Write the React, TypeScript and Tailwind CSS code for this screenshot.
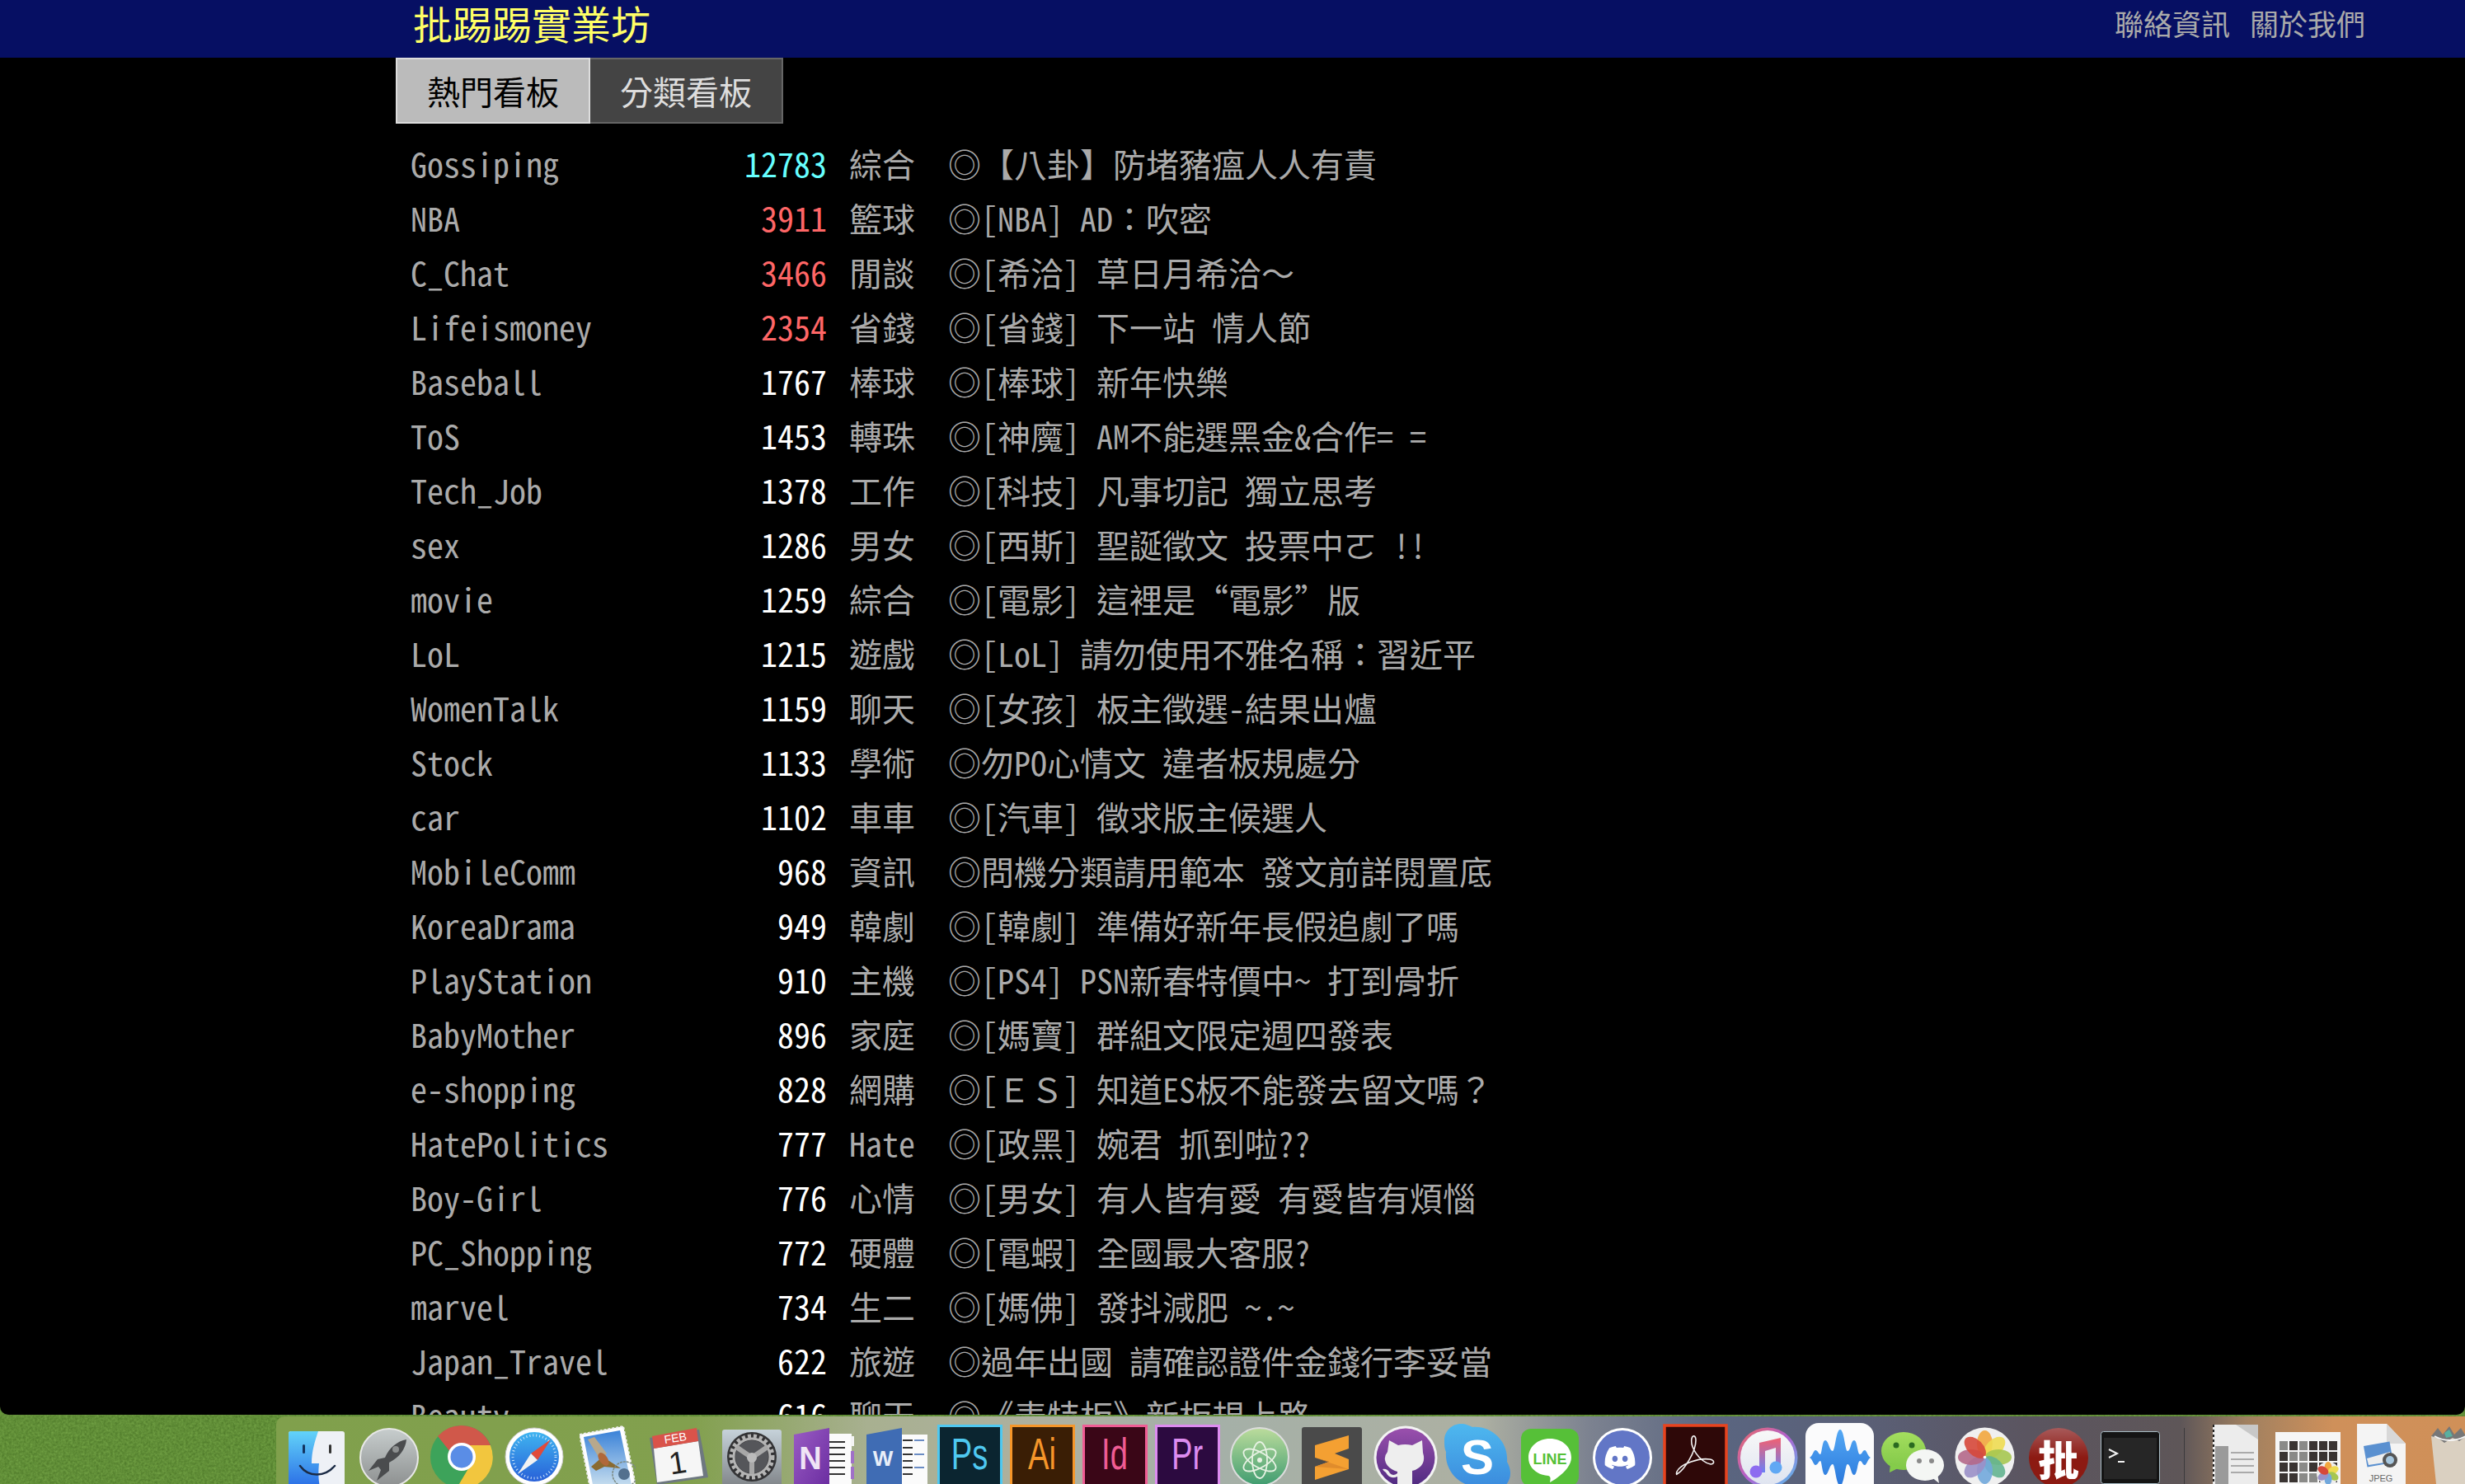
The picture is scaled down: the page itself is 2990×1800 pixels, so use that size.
import { FaDiscord } from "react-icons/fa";

type Row = {
  name: string;
  count: string;
  category: string;
  title: string;
  tone?: "cyan" | "red";
};

const rows: Row[] = [
  { name: "Gossiping", count: "12783", category: "綜合", title: "◎【八卦】防堵豬瘟人人有責", tone: "cyan" },
  { name: "NBA", count: "3911", category: "籃球", title: "◎[NBA] AD：吹密", tone: "red" },
  { name: "C_Chat", count: "3466", category: "閒談", title: "◎[希洽] 草日月希洽～", tone: "red" },
  { name: "Lifeismoney", count: "2354", category: "省錢", title: "◎[省錢] 下一站 情人節", tone: "red" },
  { name: "Baseball", count: "1767", category: "棒球", title: "◎[棒球] 新年快樂" },
  { name: "ToS", count: "1453", category: "轉珠", title: "◎[神魔] AM不能選黑金&合作= =" },
  { name: "Tech_Job", count: "1378", category: "工作", title: "◎[科技] 凡事切記 獨立思考" },
  { name: "sex", count: "1286", category: "男女", title: "◎[西斯] 聖誕徵文 投票中ㄛ !!" },
  { name: "movie", count: "1259", category: "綜合", title: "◎[電影] 這裡是“電影”版" },
  { name: "LoL", count: "1215", category: "遊戲", title: "◎[LoL] 請勿使用不雅名稱：習近平" },
  { name: "WomenTalk", count: "1159", category: "聊天", title: "◎[女孩] 板主徵選-結果出爐" },
  { name: "Stock", count: "1133", category: "學術", title: "◎勿PO心情文 違者板規處分" },
  { name: "car", count: "1102", category: "車車", title: "◎[汽車] 徵求版主候選人" },
  { name: "MobileComm", count: "968", category: "資訊", title: "◎問機分類請用範本 發文前詳閱置底" },
  { name: "KoreaDrama", count: "949", category: "韓劇", title: "◎[韓劇] 準備好新年長假追劇了嗎" },
  { name: "PlayStation", count: "910", category: "主機", title: "◎[PS4] PSN新春特價中~ 打到骨折" },
  { name: "BabyMother", count: "896", category: "家庭", title: "◎[媽寶] 群組文限定週四發表" },
  { name: "e-shopping", count: "828", category: "網購", title: "◎[ＥＳ] 知道ES板不能發去留文嗎？" },
  { name: "HatePolitics", count: "777", category: "Hate", title: "◎[政黑] 婉君 抓到啦??" },
  { name: "Boy-Girl", count: "776", category: "心情", title: "◎[男女] 有人皆有愛 有愛皆有煩惱" },
  { name: "PC_Shopping", count: "772", category: "硬體", title: "◎[電蝦] 全國最大客服?" },
  { name: "marvel", count: "734", category: "生二", title: "◎[媽佛] 發抖減肥 ~.~" },
  { name: "Japan_Travel", count: "622", category: "旅遊", title: "◎過年出國 請確認證件金錢行李妥當" },
  { name: "Beauty", count: "616", category: "聊天", title: "◎《表特板》新板規上路" },
];

type IconProps = { className: string };

function Adobe({ className, label, border, bg }: IconProps & { label: string; border: string; bg: string }) {
  return (
    <svg className={className} viewBox="0 0 79 79">
      <rect x="1.5" y="1.5" width="76" height="76" fill={bg} stroke={border} strokeWidth="3" />
      <text
        transform="translate(39 54) scale(0.72 1)"
        textAnchor="middle"
        fontSize="53"
        fontFamily="Liberation Sans, sans-serif"
        fill={border}
      >
        {label}
      </text>
    </svg>
  );
}

function Finder({ className }: IconProps) {
  return (
    <svg className={className} viewBox="0 0 68 68">
      <defs>
        <linearGradient id="finder" x1="0" y1="0" x2="0" y2="1">
          <stop offset="0" stopColor="#62d3f9" />
          <stop offset="1" stopColor="#2a6de6" />
        </linearGradient>
      </defs>
      <rect width="68" height="68" rx="3" fill="#eef1f6" />
      <path d="M3 0H36C32 12 28 24 28 39H37C36 48 36 58 38 68H3A3 3 0 0 1 0 65V3A3 3 0 0 1 3 0Z" fill="url(#finder)" />
      <rect x="17" y="16" width="3" height="11" rx="1.5" fill="#12335f" />
      <rect x="49" y="16" width="3" height="11" rx="1.5" fill="#333" />
      <path d="M14 42C24 56 44 56 56 42" fill="none" stroke="#1b2b45" strokeWidth="2.5" strokeLinecap="round" />
    </svg>
  );
}

function Launchpad({ className }: IconProps) {
  return (
    <svg className={className} viewBox="0 0 72 72">
      <defs>
        <linearGradient id="lp" x1="0" y1="0" x2="0" y2="1">
          <stop offset="0" stopColor="#c7cdcd" />
          <stop offset="1" stopColor="#8d9090" />
        </linearGradient>
      </defs>
      <circle cx="36" cy="36" r="35" fill="url(#lp)" stroke="#e8e8e8" strokeWidth="2" />
      <path d="M57 14C46 16 36 24 31 36L22 38L11 52L23 47L26 51L21 64L36 52L36 42C48 36 56 26 57 14Z" fill="#4a4c4e" />
      <circle cx="44" cy="26" r="4" fill="#8d9090" />
    </svg>
  );
}

function Chrome({ className }: IconProps) {
  return (
    <svg className={className} viewBox="0 0 76 76">
      <circle cx="38" cy="38" r="38" fill="#3da35a" />
      <path d="M38 0A38 38 0 0 1 73 24H38A15 15 0 0 0 24 32L9 13A38 38 0 0 1 38 0Z" fill="#d0584a" />
      <path d="M38 24H73A38 38 0 0 1 32 76L48 49A15 15 0 0 0 38 24Z" fill="#f2c63e" />
      <circle cx="38" cy="38" r="17" fill="#fff" />
      <circle cx="38" cy="38" r="13.5" fill="#5a8de6" />
    </svg>
  );
}

function Safari({ className }: IconProps) {
  return (
    <svg className={className} viewBox="0 0 72 72">
      <defs>
        <linearGradient id="saf" x1="0" y1="0" x2="0" y2="1">
          <stop offset="0" stopColor="#3fb4f0" />
          <stop offset="1" stopColor="#2860d8" />
        </linearGradient>
      </defs>
      <circle cx="36" cy="36" r="35" fill="#fff" stroke="#c8c8c8" />
      <circle cx="36" cy="36" r="30" fill="url(#saf)" />
      <circle cx="36" cy="36" r="26" fill="none" stroke="#cfe6fa" strokeWidth="3" strokeDasharray="1 3" />
      <path d="M56 15L32 32L40 40Z" fill="#e04a3a" />
      <path d="M16 57L32 32L40 40Z" fill="#f2f2f2" />
    </svg>
  );
}

function Mail({ className }: IconProps) {
  return (
    <svg className={className} viewBox="0 0 68 72">
      <defs>
        <linearGradient id="sky" x1="0" y1="0" x2="0" y2="1">
          <stop offset="0" stopColor="#3a82d8" />
          <stop offset="1" stopColor="#c4dcee" />
        </linearGradient>
      </defs>
      <path d="M0 11L53 1L68 72H12Z" fill="#fff" stroke="#eeeeee" strokeWidth="2" strokeDasharray="3 2" />
      <path d="M5 14L49 6L63 72H16Z" fill="url(#sky)" />
      <path d="M10 17L18 14L33 34L26 43Z" fill="#b8a88c" />
      <path d="M14 50L28 38L50 52L30 50L20 55Z" fill="#8a6a30" />
      <ellipse cx="29" cy="41" rx="5" ry="9" fill="#b0683a" transform="rotate(-35 29 41)" />
      <circle cx="55" cy="59" r="15" fill="none" stroke="#7c8a84" strokeWidth="1.5" strokeDasharray="3 1" />
      <circle cx="54" cy="59" r="7" fill="#52708e" />
    </svg>
  );
}

function Calendar({ className }: IconProps) {
  return (
    <svg className={className} viewBox="0 0 72 72">
      <path d="M0 12L60 2L71 60L9 69Z" fill="#6e7880" />
      <path d="M5 25L59 16L65 58L9 66Z" fill="#f6f6f6" />
      <path d="M3 10L57 0L59 16L5 25Z" fill="#d9534a" />
      <text
        transform="translate(32 17) rotate(-9)"
        textAnchor="middle"
        fontSize="14"
        fontFamily="Liberation Sans, sans-serif"
        fill="#fff"
      >
        FEB
      </text>
      <text
        transform="translate(36 55) rotate(-9)"
        textAnchor="middle"
        fontSize="38"
        fontFamily="Liberation Sans, sans-serif"
        fill="#222"
      >
        1
      </text>
    </svg>
  );
}

function SysPrefs({ className }: IconProps) {
  return (
    <svg className={className} viewBox="0 0 72 72">
      <defs>
        <linearGradient id="sys" x1="0" y1="0" x2="0" y2="1">
          <stop offset="0" stopColor="#c6d2da" />
          <stop offset="1" stopColor="#7e8286" />
        </linearGradient>
      </defs>
      <rect width="72" height="72" rx="3" fill="url(#sys)" />
      <circle cx="36" cy="33" r="30" fill="#333335" />
      <circle cx="36" cy="33" r="25" fill="none" stroke="#b4b4b4" strokeWidth="5" strokeDasharray="4 3" />
      <circle cx="36" cy="33" r="22" fill="none" stroke="#b4b4b4" strokeWidth="3" />
      <circle cx="36" cy="33" r="20" fill="#55565a" />
      <path d="M36 34L17 21M36 34L55 21M36 34V54" stroke="#a8a8a8" strokeWidth="6" />
      <circle cx="36" cy="34" r="6" fill="#bbb" />
    </svg>
  );
}

function OneNote({ className }: IconProps) {
  return (
    <svg className={className} viewBox="0 0 74 74">
      <defs>
        <linearGradient id="onenote" x1="0" y1="0" x2="1" y2="1">
          <stop offset="0" stopColor="#9a5cc4" />
          <stop offset="1" stopColor="#6a2ca0" />
        </linearGradient>
      </defs>
      <rect x="42" y="7" width="28" height="67" fill="#fbfbfb" />
      <rect x="69" y="10" width="4" height="12" fill="#f4f4f4" />
      <rect x="69" y="28" width="4" height="15" fill="#a070c8" />
      <rect x="69" y="47" width="4" height="15" fill="#a070c8" />
      <path d="M43 17H62M43 24H62M43 32H62M43 40H62M43 48H62M43 56H62" stroke="#333" strokeWidth="2" />
      <path d="M0 8L43 0V74H0Z" fill="url(#onenote)" />
      <text x="20" y="50" textAnchor="middle" fontSize="38" fontFamily="Liberation Sans, sans-serif" fontWeight="700" fill="#f0e4f6">
        N
      </text>
    </svg>
  );
}

function Word({ className }: IconProps) {
  return (
    <svg className={className} viewBox="0 0 74 74">
      <rect x="40" y="8" width="34" height="66" fill="#fbfbfb" />
      <path d="M44 15H70M44 24H70M44 32H70M44 40H70M44 48H70M44 56H70" stroke="#333" strokeWidth="2" strokeDasharray="12 14" />
      <path d="M58 15H70M58 32H70M58 48H70" stroke="#6a8cc4" strokeWidth="2" />
      <path d="M0 8L43 0V74H0Z" fill="#3f6cb4" />
      <text x="20" y="46" textAnchor="middle" fontSize="26" fontFamily="Liberation Sans, sans-serif" fontWeight="700" fill="#e8eef8">
        W
      </text>
    </svg>
  );
}

function Atom({ className }: IconProps) {
  return (
    <svg className={className} viewBox="0 0 72 72">
      <defs>
        <linearGradient id="atom" x1="0" y1="0" x2="0" y2="1">
          <stop offset="0" stopColor="#bcdc9c" />
          <stop offset="1" stopColor="#3f9c70" />
        </linearGradient>
      </defs>
      <circle cx="36" cy="36" r="35" fill="url(#atom)" stroke="#ddd" strokeWidth="2" />
      <g fill="none" stroke="#e8f2e4" strokeWidth="1.8">
        <ellipse cx="36" cy="40" rx="22" ry="9" transform="rotate(30 36 40)" />
        <ellipse cx="36" cy="40" rx="22" ry="9" transform="rotate(-30 36 40)" />
        <ellipse cx="36" cy="40" rx="22" ry="9" transform="rotate(90 36 40)" />
      </g>
      <circle cx="36" cy="40" r="3" fill="#e8f2e4" />
    </svg>
  );
}

function Sublime({ className }: IconProps) {
  return (
    <svg className={className} viewBox="0 0 73 73">
      <rect width="73" height="73" rx="3" fill="#4a4a4a" />
      <path d="M16 22L57 10V26L40 32L57 39V51L16 64V48L33 42L16 37Z" fill="#f4a032" />
      <path d="M16 37L57 51L16 48L33 42Z" fill="#e08c2c" />
    </svg>
  );
}

function Github({ className }: IconProps) {
  return (
    <svg className={className} viewBox="0 0 78 78">
      <defs>
        <linearGradient id="gh" x1="0" y1="0" x2="0" y2="1">
          <stop offset="0" stopColor="#9a50ad" />
          <stop offset="1" stopColor="#4e2a80" />
        </linearGradient>
      </defs>
      <circle cx="39" cy="39" r="38.5" fill="#f4f4f4" />
      <circle cx="39" cy="39" r="35.5" fill="url(#gh)" />
      <path
        d="M19 18L30 24Q38 22 47 24L59 18L60 33Q64 46 54 52Q50 55 47 55V78H29V62Q20 66 15 57Q12 55 11 53Q17 52 20 58Q24 62 29 58V56Q16 52 14 42Q13 37 17 32Z"
        fill="#eeeeee"
      />
    </svg>
  );
}

function Skype({ className }: IconProps) {
  return (
    <svg className={className} viewBox="0 0 80 80">
      <defs>
        <linearGradient id="skype" x1="0" y1="0" x2="0" y2="1" gradientUnits="objectBoundingBox">
          <stop offset="0" stopColor="#4eb8ef" />
          <stop offset="1" stopColor="#3a88dc" />
        </linearGradient>
      </defs>
      <path
        d="M20 0C26 0 30 2 34 4C58 2 78 22 76 46C78 50 80 54 80 60C80 72 70 82 58 82C52 82 48 80 44 76C20 78 0 58 2 34C0 30 0 26 0 20C0 9 9 0 20 0Z"
        fill="url(#skype)"
      />
      <text x="40" y="61" textAnchor="middle" fontSize="60" fontFamily="Liberation Sans, sans-serif" fontWeight="700" fill="#fff">
        S
      </text>
    </svg>
  );
}

function Line({ className }: IconProps) {
  return (
    <svg className={className} viewBox="0 0 70 70">
      <rect width="70" height="70" rx="12" fill="#56c038" />
      <path d="M35 12C50 12 61 22 61 35C61 46 48 58 35 65C36 60 36 58 33 57C19 56 9 47 9 35C9 22 20 12 35 12Z" fill="#fff" />
      <text x="35" y="43" textAnchor="middle" fontSize="18" fontFamily="Liberation Sans, sans-serif" fontWeight="700" fill="#56c038">
        LINE
      </text>
    </svg>
  );
}

function Discord({ className }: IconProps) {
  return (
    <svg className={className} viewBox="0 0 74 74">
      <circle cx="37" cy="37" r="36" fill="#fff" />
      <circle cx="37" cy="37" r="33" fill="#6276c6" />
      <FaDiscord x="14" y="17" width="46" height="46" color="#fff" />
    </svg>
  );
}

function Acrobat({ className }: IconProps) {
  return (
    <svg className={className} viewBox="0 0 79 79">
      <rect x="2" y="2" width="75" height="75" fill="#2e0808" stroke="#e8431e" strokeWidth="3.5" />
      <path
        d="M17 61C26 56 40 34 40 20C40 14 36 13 35 18C33 28 44 46 58 49C63 49 63 44 57 43C45 41 22 48 17 58C16 61 17 62 17 61Z"
        fill="none"
        stroke="#f2f2f2"
        strokeWidth="1.6"
      />
    </svg>
  );
}

function ITunes({ className }: IconProps) {
  return (
    <svg className={className} viewBox="0 0 74 74">
      <defs>
        <linearGradient id="itunesRing" x1="0" y1="0" x2="1" y2="1">
          <stop offset="0" stopColor="#ee6a62" />
          <stop offset="0.5" stopColor="#b060d0" />
          <stop offset="1" stopColor="#50c8f0" />
        </linearGradient>
        <linearGradient id="itunesNote" x1="0" y1="0" x2="0" y2="1">
          <stop offset="0" stopColor="#f26070" />
          <stop offset="1" stopColor="#6a80f4" />
        </linearGradient>
        <linearGradient id="itunesDisc" x1="0" y1="0" x2="0" y2="1">
          <stop offset="0" stopColor="#f8f8f8" />
          <stop offset="1" stopColor="#dfe4f0" />
        </linearGradient>
      </defs>
      <circle cx="37" cy="37" r="36.5" fill="url(#itunesRing)" />
      <circle cx="37" cy="37" r="33" fill="url(#itunesDisc)" />
      <path d="M27 19L53 13V49H47V25L34 29V55H27Z" fill="url(#itunesNote)" />
      <circle cx="23" cy="54" r="7.5" fill="#8c6cf0" />
      <circle cx="47" cy="49" r="7.5" fill="#60a8f4" />
    </svg>
  );
}

function Waves({ className }: IconProps) {
  return (
    <svg className={className} viewBox="0 0 83 83">
      <defs>
        <linearGradient id="wave" x1="0" y1="0" x2="0" y2="1">
          <stop offset="0" stopColor="#54a8f4" />
          <stop offset="1" stopColor="#2a78dc" />
        </linearGradient>
      </defs>
      <rect width="83" height="100" rx="16" fill="#fbfbfc" />
      <path
        d="M5 42C8 41 10 33 12 33C15 33 16 38 18 38C20 38 20 21 24 21C28 21 29 34 33 34C36 34 37 8 42 8C47 8 48 34 51 34C55 34 55 21 59 21C63 21 63 38 66 38C69 38 69 33 72 33C74 33 76 41 79 42C76 43 74 51 72 51C69 51 69 46 66 46C63 46 63 63 59 63C55 63 55 50 51 50C48 50 47 76 42 76C37 76 36 50 33 50C29 50 28 63 24 63C20 63 20 46 18 46C16 46 15 51 12 51C10 51 8 43 5 42Z"
        fill="url(#wave)"
      />
    </svg>
  );
}

function WeChat({ className }: IconProps) {
  return (
    <svg className={className} viewBox="0 0 77 64">
      <defs>
        <linearGradient id="wechat" x1="0" y1="0" x2="0" y2="1">
          <stop offset="0" stopColor="#a4de5e" />
          <stop offset="1" stopColor="#80c848" />
        </linearGradient>
      </defs>
      <ellipse cx="27" cy="23" rx="27" ry="23" fill="url(#wechat)" />
      <path d="M11 38L10 49L24 42Z" fill="#84cc4a" />
      <ellipse cx="53" cy="40" rx="23" ry="19" fill="#f4f6f4" />
      <path d="M60 54L70 62L68 50Z" fill="#f4f6f4" />
      <circle cx="18" cy="16" r="3.5" fill="#2a6a20" />
      <circle cx="37" cy="16" r="3.5" fill="#2a6a20" />
      <circle cx="46" cy="35" r="3" fill="#8a8a8a" />
      <circle cx="61" cy="35" r="3" fill="#8a8a8a" />
    </svg>
  );
}

function Photos({ className }: IconProps) {
  const petals = ["#f2a63e", "#eedc52", "#a6c650", "#64b490", "#72a8dc", "#9a90c8", "#b4688a", "#d6483a"];
  return (
    <svg className={className} viewBox="0 0 73 73">
      <circle cx="36.5" cy="36.5" r="36" fill="#f0f0f0" />
      {petals.map((color, i) => (
        <ellipse
          key={color}
          cx="36.5"
          cy="20"
          rx="9.5"
          ry="16"
          fill={color}
          opacity="0.9"
          transform={`rotate(${i * 45} 36.5 36.5)`}
        />
      ))}
      <circle cx="36.5" cy="36.5" r="1.8" fill="#fff" />
    </svg>
  );
}

function PiBadge({ className }: IconProps) {
  return (
    <svg className={className} viewBox="0 0 72 72">
      <defs>
        <linearGradient id="pi" x1="0" y1="0" x2="0" y2="1">
          <stop offset="0" stopColor="#a85a5a" />
          <stop offset="0.5" stopColor="#8c1a12" />
        </linearGradient>
      </defs>
      <circle cx="36" cy="36" r="36" fill="url(#pi)" />
      <text x="36" y="58" textAnchor="middle" fontSize="50" fontFamily="Noto Sans CJK TC, sans-serif" fontWeight="900" fill="#fff">
        批
      </text>
    </svg>
  );
}

function Terminal({ className }: IconProps) {
  return (
    <svg className={className} viewBox="0 0 72 64">
      <rect x="0.5" y="0.5" width="71" height="63" rx="3" fill="#141414" stroke="#a8bcc4" />
      <rect x="4" y="8" width="64" height="50" fill="#262626" />
      <path d="M10 22L20 27L10 32" fill="none" stroke="#f2f2f2" strokeWidth="2" />
      <path d="M21 37H29" stroke="#f2f2f2" strokeWidth="2" />
    </svg>
  );
}

function ScanDoc({ className }: IconProps) {
  return (
    <svg className={className} viewBox="0 0 55 72">
      <path d="M0 0H55V72H0Z" fill="#ececec" />
      <path d="M28 0L55 18V0Z" fill="#c8c8c8" />
      <rect x="3" y="26" width="16" height="46" fill="#9a9a9a" />
      <path d="M1 0V72" stroke="#222" strokeWidth="2" strokeDasharray="3 3" />
      <path d="M22 34H50M22 42H50M22 50H50M22 58H50" stroke="#aaa" strokeWidth="2" />
    </svg>
  );
}

function PhotoGrid({ className }: IconProps) {
  const cells = Array.from({ length: 30 }, (_, i) => i);
  const petals = ["#f2a63e", "#eedc52", "#a6c650", "#72a8dc", "#9a90c8", "#d6483a"];
  return (
    <svg className={className} viewBox="0 0 79 63">
      <rect width="79" height="63" fill="#f6f6f6" />
      {cells.map((i) => (
        <rect
          key={i}
          x={5 + (i % 6) * 12}
          y={11 + Math.floor(i / 6) * 13}
          width="10"
          height="11"
          fill={i % 6 === 2 || i % 7 === 0 ? "#8a8a88" : "#3a3432"}
        />
      ))}
      <circle cx="64" cy="50" r="14" fill="#eee" />
      {petals.map((color, i) => (
        <ellipse key={color} cx="64" cy="43" rx="4.5" ry="7" fill={color} transform={`rotate(${i * 60} 64 50)`} />
      ))}
    </svg>
  );
}

function JpegFile({ className }: IconProps) {
  return (
    <svg className={className} viewBox="0 0 59 73">
      <path d="M0 0H36L59 24V73H0Z" fill="#f4f4f4" />
      <path d="M36 0L59 24H36Z" fill="#d8d8d8" />
      <rect x="10" y="24" width="32" height="26" fill="#5a90d0" transform="rotate(-10 26 37)" />
      <path d="M12 42L40 34V46L14 50Z" fill="#eee" />
      <circle cx="40" cy="44" r="9" fill="#555" />
      <circle cx="40" cy="44" r="5" fill="#a8c8e0" />
      <text x="29" y="70" textAnchor="middle" fontSize="11" fontFamily="Liberation Sans, sans-serif" fill="#666">
        JPEG
      </text>
    </svg>
  );
}

function Trash({ className }: IconProps) {
  return (
    <svg className={className} viewBox="0 0 44 70">
      <path d="M2 12H44V70H8Z" fill="#dcdcd4" opacity="0.85" />
      <path d="M2 12L10 2L16 10L24 0L30 10L38 2L44 12L36 18L28 14L18 20L10 14Z" fill="#777" />
      <path d="M18 8L24 4L28 12L20 14Z" fill="#5ab0a0" />
      <path d="M6 12Q24 22 44 12" fill="none" stroke="#f4f4f4" strokeWidth="2" />
    </svg>
  );
}

function Dock() {
  return (
    <div className="absolute left-[335px] right-0 top-[1718px] flex h-[82px] items-start overflow-hidden rounded-tl-[10px] bg-[linear-gradient(90deg,#80a04c_0%,#82a04e_19%,#a8b090_27%,#aeb0a0_35%,#a4b0a8_42%,#adb0a2_55%,#7c8290_60%,#5a6580_66%,#5a6078_72%,#5b5560_80%,#5e5658_87%,#a08060_90%,#cf905a_94%,#d09058_100%)]">
      <Finder className="ml-[15px] mt-[18px] h-[68px] w-[68px] shrink-0" />
      <Launchpad className="ml-[18px] mt-[14px] h-[72px] w-[72px] shrink-0" />
      <Chrome className="ml-[14px] mt-[11px] h-[76px] w-[76px] shrink-0" />
      <Safari className="ml-[14px] mt-[13px] h-[72px] w-[72px] shrink-0" />
      <Mail className="ml-[19px] mt-[11px] h-[72px] w-[68px] shrink-0" />
      <Calendar className="ml-[17px] mt-[14px] h-[72px] w-[72px] shrink-0" />
      <SysPrefs className="ml-[16px] mt-[16px] h-[72px] w-[72px] shrink-0" />
      <OneNote className="ml-[15px] mt-[14px] h-[74px] w-[74px] shrink-0" />
      <Word className="ml-[14px] mt-[14px] h-[74px] w-[74px] shrink-0" />
      <Adobe className="ml-[12px] mt-[10px] h-[79px] w-[79px] shrink-0" label="Ps" border="#4fc8f0" bg="#0b2530" />
      <Adobe className="ml-[9px] mt-[10px] h-[79px] w-[79px] shrink-0" label="Ai" border="#f5962a" bg="#3a1e05" />
      <Adobe className="ml-[9px] mt-[10px] h-[79px] w-[79px] shrink-0" label="Id" border="#ef5c94" bg="#3a0617" />
      <Adobe className="ml-[9px] mt-[10px] h-[79px] w-[79px] shrink-0" label="Pr" border="#dd8cf0" bg="#2c0a40" />
      <Atom className="ml-[12px] mt-[13px] h-[72px] w-[72px] shrink-0" />
      <Sublime className="ml-[15px] mt-[13px] h-[73px] w-[73px] shrink-0" />
      <Github className="ml-[14px] mt-[11px] h-[78px] w-[78px] shrink-0" />
      <Skype className="ml-[8px] mt-[9px] h-[80px] w-[80px] shrink-0" />
      <Line className="ml-[13px] mt-[15px] h-[70px] w-[70px] shrink-0" />
      <Discord className="ml-[16px] mt-[13px] h-[74px] w-[74px] shrink-0" />
      <Acrobat className="ml-[12px] mt-[9px] h-[79px] w-[79px] shrink-0" />
      <ITunes className="ml-[11px] mt-[13px] h-[74px] w-[74px] shrink-0" />
      <Waves className="ml-[9px] mt-[8px] h-[83px] w-[83px] shrink-0" />
      <WeChat className="ml-[9px] mt-[19px] h-[64px] w-[77px] shrink-0" />
      <Photos className="ml-[12px] mt-[13px] h-[73px] w-[73px] shrink-0" />
      <PiBadge className="ml-[17px] mt-[14px] h-[72px] w-[72px] shrink-0" />
      <Terminal className="ml-[15px] mt-[18px] h-[64px] w-[72px] shrink-0" />
      <div className="ml-[29px] mt-[14px] h-[68px] w-[1px] shrink-0 bg-[#3a3a3c]" />
      <ScanDoc className="ml-[34px] mt-[10px] h-[72px] w-[55px] shrink-0" />
      <PhotoGrid className="ml-[21px] mt-[19px] h-[63px] w-[79px] shrink-0" />
      <JpegFile className="ml-[20px] mt-[9px] h-[73px] w-[59px] shrink-0" />
      <Trash className="ml-[29px] mt-[12px] h-[70px] w-[44px] shrink-0" />
    </div>
  );
}

function BoardRow({ name, count, category, title, tone }: Row) {
  const countColor = tone === "cyan" ? "text-[#66ffff]" : tone === "red" ? "text-[#ff6666]" : "text-white";
  return (
    <div className="flex h-[66px] shrink-0 items-center whitespace-pre">
      <span className="w-[380px] shrink-0 pl-[17px]">{name}</span>
      <span className={`w-[142px] shrink-0 text-right ${countColor}`}>{count}</span>
      <span className="ml-[27px] w-[80px] shrink-0">{category}</span>
      <span className="ml-[40px]">{title}</span>
    </div>
  );
}

export default function App() {
  return (
    <div className="relative h-[1800px] w-[2990px] overflow-hidden bg-[#4f7a2a] font-['Noto_Sans_Mono_CJK_TC','Noto_Sans_CJK_TC',monospace] text-[40px] text-[#aaaaaa]">
      {/* grass wallpaper */}
      <svg className="absolute inset-0 h-full w-full">
        <filter id="grass">
          <feTurbulence type="fractalNoise" baseFrequency="0.35" numOctaves="3" seed="4" />
          <feColorMatrix values="0 0 0 0 0.22  0 0 0 0 0.45  0 0 0 0 0.08  0.9 0 0 0 -0.1" />
        </filter>
        <rect width="100%" height="100%" filter="url(#grass)" />
      </svg>

      <div className="relative flex h-[1716px] flex-col overflow-hidden rounded-b-[10px] bg-black">
        <header className="flex h-[70px] shrink-0 items-start justify-between bg-[#060f63] pl-[501px] pr-[121px]">
          <h1 className="text-[48px] font-normal leading-[54px] text-[#ffff66]">批踢踢實業坊</h1>
          <nav className="flex gap-[24px] pt-[6px] text-[35px] leading-[44px]">
            <span>聯絡資訊</span>
            <span>關於我們</span>
          </nav>
        </header>

        <div className="ml-[480px] flex h-[80px] shrink-0">
          <div className="flex w-[236px] items-center justify-center border-2 border-[#dddddd] bg-[#bbbbbb] text-black">熱門看板</div>
          <div className="flex w-[234px] items-center justify-center border-2 border-l-0 border-[#666666] bg-[#444444] text-[#dddddd]">分類看板</div>
        </div>

        <div className="ml-[481px] flex flex-col pt-[15px]">
          {rows.map((row) => (
            <BoardRow key={row.name} {...row} />
          ))}
        </div>
      </div>

      <Dock />
    </div>
  );
}
